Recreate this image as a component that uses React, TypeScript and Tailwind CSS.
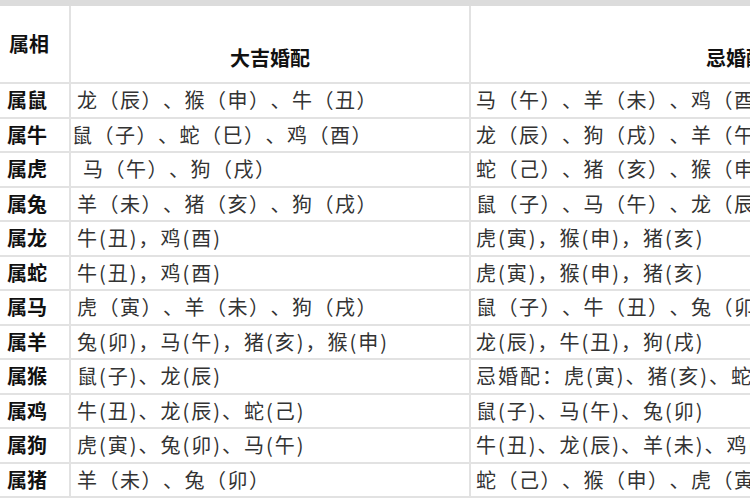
const rows: [string, string, string][] = [
  ["属鼠", "龙（辰）、猴（申）、牛（丑）", "马（午）、羊（未）、鸡（酉）"],
  ["属牛", "鼠（子）、蛇（巳）、鸡（酉）", "龙（辰）、狗（戌）、羊（午）"],
  ["属虎", " 马（午）、狗（戌）", "蛇（己）、猪（亥）、猴（申）"],
  ["属兔", "羊（未）、猪（亥）、狗（戌）", "鼠（子）、马（午）、龙（辰）"],
  ["属龙", "牛(丑)，鸡(酉)", "虎(寅)，猴(申)，猪(亥)"],
  ["属蛇", "牛(丑)，鸡(酉)", "虎(寅)，猴(申)，猪(亥)"],
  ["属马", "虎（寅）、羊（未）、狗（戌）", "鼠（子）、牛（丑）、兔（卯）"],
  ["属羊", "兔(卯)，马(午)，猪(亥)，猴(申)", "龙(辰)，牛(丑)，狗(戌)"],
  ["属猴", "鼠(子)、龙(辰)", "忌婚配：虎(寅)、猪(亥)、蛇(巳)"],
  ["属鸡", "牛(丑)、龙(辰)、蛇(己)", "鼠(子)、马(午)、兔(卯)"],
  ["属狗", "虎(寅)、兔(卯)、马(午)", "牛(丑)、龙(辰)、羊(未)、鸡(酉)"],
  ["属猪", "羊（未）、兔（卯）", "蛇（己）、猴（申）、虎（寅）"],
];

const font = { fontFamily: '"Noto Sans CJK SC", "Noto Sans", sans-serif' };

// half-width brackets read tighter, so they get a little more tracking
const spacing = (s: string) => (s.includes("(") ? "tracking-[2px]" : "tracking-[1.5px]");

export default function App() {
  return (
    <div className="w-[750px] h-[500px] overflow-hidden bg-white [text-spacing-trim:space-all]" style={font}>
      <div className="h-[6px] bg-[#dcdcdc]" />
      <div className="grid grid-cols-[71px_400px_530px] grid-rows-[78px_repeat(12,34.5px)] w-max">
        {/* header */}
        <div className="flex items-center pl-[9px] border-r-2 border-b-2 border-[#e2e2e2] text-[20px] font-bold text-[#111]">
          属相
        </div>
        <div className="flex items-end justify-center pb-[9px] border-r-2 border-b-2 border-[#e2e2e2] text-[20px] font-bold text-[#111]">
          大吉婚配
        </div>
        <div className="flex items-end justify-center pb-[9px] border-b-2 border-[#e2e2e2] text-[20px] font-bold text-[#111]">
          忌婚配
        </div>

        {rows.map(([name, good, bad], i) => (
          <div key={name} className="contents">
            <div className="flex items-center pl-[7px] border-r-2 border-b-2 border-[#e2e2e2] text-[20px] font-bold text-[#111] whitespace-nowrap">
              {name}
            </div>
            <div
              className={`flex items-center ${i === 1 ? "pl-[1px]" : "pl-[6px]"} border-r-2 border-b-2 border-[#e2e2e2] text-[20px] text-[#333] whitespace-pre ${spacing(good)}`}
            >
              {good}
            </div>
            <div className={`flex items-center pl-[5px] border-b-2 border-[#e2e2e2] text-[20px] text-[#333] whitespace-pre ${spacing(bad)}`}>
              {bad}
            </div>
          </div>
        ))}
      </div>
    </div>
  );
}
